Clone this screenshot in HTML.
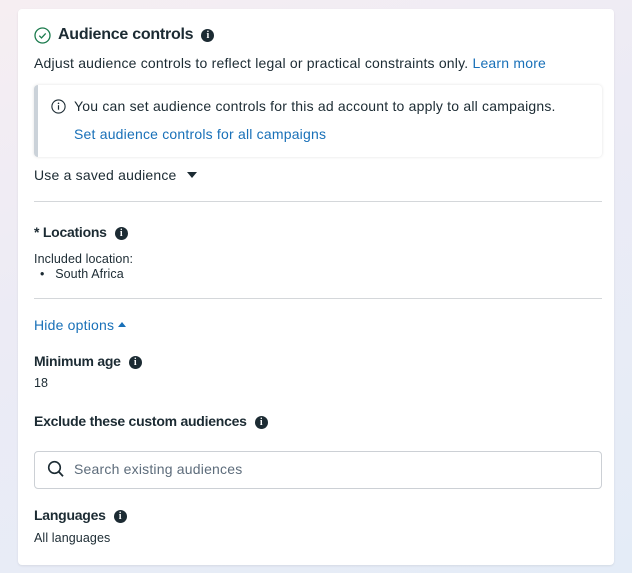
<!DOCTYPE html>
<html><head><meta charset="utf-8"><style>
*{margin:0;padding:0;box-sizing:border-box}
html,body{width:632px;height:573px;overflow:hidden}
body{background:linear-gradient(160deg,#f6eef2 0%,#ecebf5 40%,#e4ecf7 100%);font-family:"Liberation Sans",sans-serif;color:#1c2b33;position:relative}
.card{position:absolute;left:18px;top:9px;width:596px;height:556px;background:#fff;border-radius:4px;box-shadow:0 1px 2px rgba(0,0,0,.08)}
.a{position:absolute;white-space:nowrap;letter-spacing:0.2px}
.b{font-weight:bold;letter-spacing:-0.25px}
.t14{font-size:14px}
.lnk{color:#1870b8}
.info{display:inline-block;width:13px;height:13px;border-radius:50%;background:#1c2b33;color:#fff;font-size:10px;font-weight:bold;text-align:center;line-height:13px;font-family:"Liberation Serif",serif;vertical-align:1px;margin-left:8px;letter-spacing:0}
.hr{position:absolute;left:16px;width:568px;height:1px;background:#d4d7da}
.s{font-size:12.5px;letter-spacing:0.1px}
</style></head><body>
<div class="card">
  <svg style="position:absolute;left:16px;top:18px" width="17" height="17" viewBox="0 0 17 17"><circle cx="8.5" cy="8.5" r="7.5" fill="none" stroke="#1a7a4c" stroke-width="1.3"/><path d="M5.3 8.7l2.2 2.2 4.2-4.5" fill="none" stroke="#1a7a4c" stroke-width="1.3"/></svg>
  <div class="a b" style="left:40px;top:17px;font-size:16px">Audience controls<span class="info">i</span></div>
  <div class="a t14" style="left:16px;top:46px">Adjust audience controls to reflect legal or practical constraints only. <span class="lnk">Learn more</span></div>
  <div style="position:absolute;left:16px;top:76px;width:568px;height:72px;border-radius:4px;border-left:4px solid #cbd2d9;box-shadow:0 0 3px rgba(0,0,0,.12)"></div>
  <svg style="position:absolute;left:33px;top:90px" width="15" height="15" viewBox="0 0 15 15"><circle cx="7.5" cy="7.5" r="6.6" fill="none" stroke="#1c2b33" stroke-width="1.1"/><rect x="6.9" y="6.2" width="1.2" height="4.5" fill="#1c2b33"/><circle cx="7.5" cy="4.3" r=".8" fill="#1c2b33"/></svg>
  <div class="a t14" style="left:56px;top:89px">You can set audience controls for this ad account to apply to all campaigns.</div>
  <div class="a t14 lnk" style="left:56px;top:117px">Set audience controls for all campaigns</div>
  <div class="a t14" style="left:16px;top:158px">Use a saved audience <span style="display:inline-block;margin-left:6px;width:0;height:0;border-left:5px solid transparent;border-right:5px solid transparent;border-top:6px solid #1c2b33;vertical-align:2px"></span></div>
  <div class="hr" style="top:192px"></div>
  <div class="a t14 b" style="left:16px;top:215px">* Locations<span class="info">i</span></div>
  <div class="a s" style="left:16px;top:243px">Included location:</div>
  <div class="a s" style="left:22px;top:258px">•&nbsp;&nbsp;&nbsp;South Africa</div>
  <div class="hr" style="top:289px"></div>
  <div class="a t14 lnk" style="left:16px;top:308px">Hide options <span style="display:inline-block;width:0;height:0;border-left:4px solid transparent;border-right:4px solid transparent;border-bottom:5px solid #1870b8;vertical-align:3px"></span></div>
  <div class="a t14 b" style="left:16px;top:344px">Minimum age<span class="info">i</span></div>
  <div class="a s" style="left:16px;top:367px">18</div>
  <div class="a t14 b" style="left:16px;top:404px">Exclude these custom audiences<span class="info">i</span></div>
  <div style="position:absolute;left:16px;top:442px;width:568px;height:38px;border:1px solid #ccd0d5;border-radius:4px"></div>
  <svg style="position:absolute;left:29px;top:451px" width="18" height="18" viewBox="0 0 18 18"><circle cx="7.5" cy="7.5" r="5.8" fill="none" stroke="#1c2b33" stroke-width="1.6"/><path d="M11.8 11.8l4.2 4.5" stroke="#1c2b33" stroke-width="1.8"/></svg>
  <div class="a t14" style="left:56px;top:452px;color:#5d6c7b">Search existing audiences</div>
  <div class="a t14 b" style="left:16px;top:498px">Languages<span class="info">i</span></div>
  <div class="a s" style="left:16px;top:522px">All languages</div>
</div>
</body></html>
